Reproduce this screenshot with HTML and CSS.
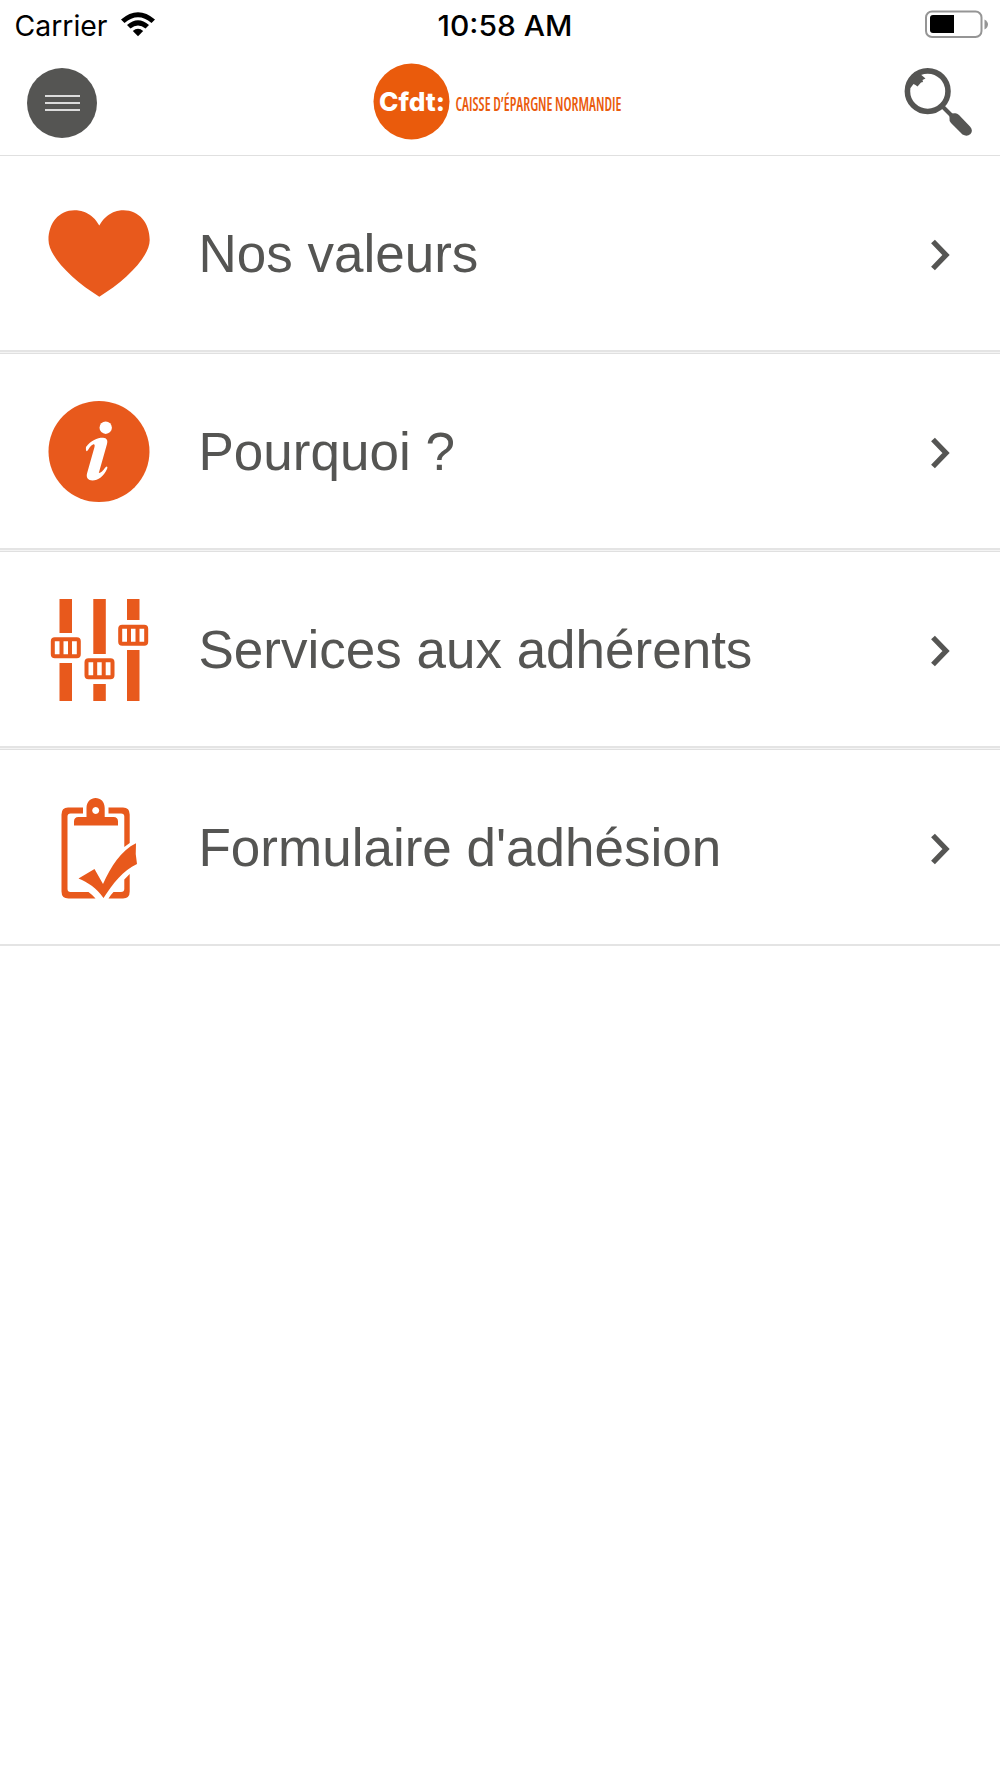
FILE: index.html
```html
<!DOCTYPE html>
<html lang="fr">
<head>
    <meta charset="UTF-8">
    <meta name="viewport" content="width=device-width, initial-scale=1.0">
    <title>CFDT Caisse d'Épargne Normandie</title>
    <link rel="stylesheet" href="styles.css">
</head>
<body>

    <div class="status">
        <svg class="carrier" viewBox="0 0 160 50">
            <text x="14.500" y="35.500" font-size="28" textLength="93" lengthAdjust="spacingAndGlyphs">Carrier</text>
            <path d="M121 19.500 Q138 4.800 155 19.500 L151.500 23 Q138 11.500 124.500 23 Z"/>
            <path d="M127 25 Q138 15.500 149 25 L145.500 28.500 Q138 22.500 130.500 28.500 Z"/>
            <path d="M132.800 31 Q138 26.500 143.200 31 L138 36.300 Z"/>
        </svg>
        <svg class="clock" viewBox="0 0 160 50">
            <text x="16.500" y="35.500" font-size="28" font-weight="500" textLength="135" lengthAdjust="spacingAndGlyphs">10:58 AM</text>
        </svg>
        <svg class="battery" viewBox="0 0 80 50">
            <rect x="6" y="11.500" width="55.500" height="25.500" rx="6" fill="none" stroke="#959595" stroke-width="2"/>
            <path d="M13 15 H34 V33 H13 Q10 33 10 30 V18 Q10 15 13 15 Z"/>
            <path d="M64.500 19.500 Q68 21.500 68 24.300 Q68 27.500 64.500 29.500 Z" fill="#959595"/>
        </svg>
    </div>

    <header class="header">
        <button class="menu" aria-label="Menu">
            <span></span>
            <span></span>
            <span></span>
        </button>
        <svg class="logo" viewBox="0 0 280 80">
            <circle cx="41.500" cy="39.500" r="38" fill="#ea5b0c"/>
            <text class="brand" x="9" y="48.500" font-size="26" textLength="66" lengthAdjust="spacingAndGlyphs">Cfdt:</text>
            <text class="section" x="85.500" y="48.500" font-size="19" textLength="166" lengthAdjust="spacingAndGlyphs">CAISSE D’ÉPARGNE NORMANDIE</text>
        </svg>
        <svg class="search" viewBox="0 0 70 70">
            <circle cx="24.700" cy="24.200" r="20.300" fill="none" stroke="#555553" stroke-width="5.600"/>
            <path d="M6 18 L16 6 L22.500 11.500 L19.500 13 L20 15 L18 15.500 L14.500 19.500 L12.500 18 L10.500 17 L7.500 21 Z" fill="#555553"/>
            <path d="M38 38 L50 50" stroke="#555553" stroke-width="4"/>
            <path d="M46.500 51 Q45.500 46 52 46.200 Q54 46 56 48 L67 59.500 Q70.500 63.500 67.500 67 Q64 70 59.500 67.500 L48 56 Q46 54 46.500 51 Z" fill="#555553"/>
        </svg>
    </header>

    <main class="list">
        <a class="item">
            <svg class="icon" viewBox="0 0 110 110">
                <path d="M54.300 26.600 C47 13 35 11.300 29.500 11.300 C14 11.300 3.500 24 3.500 41 C3.500 58 29 82 54.300 97.700 C80 82 104.700 58 104.700 41 C104.700 24 94 11.300 78.500 11.300 C73 11.300 62 13 54.300 26.600 Z"/>
            </svg>
            <span class="label">Nos valeurs</span>
            <svg class="arrow" viewBox="0 0 24 36"><path d="M3 4.500 L16 18 L3 31.500"/></svg>
        </a>
        <a class="item">
            <svg class="icon" viewBox="0 0 110 110">
                <circle cx="54" cy="54.500" r="50.500"/>
                <g fill="#fff">
                    <circle cx="60.700" cy="30.700" r="6.200"/>
                    <path d="M41 50 C46 43 53 40.500 58 40.700 C62 41 63 43.500 62 47 L53.800 76 C57 76 59 71.500 61.500 69.500 Q63 69.500 62 72 C59 79 53 83.500 47.500 83.500 C43 83.500 41 80.500 42 76.500 L49.500 50 C50 48 49.500 47 48 47.500 C45 49 44 52 42 54.300 Q40.500 54 41 50 Z"/>
                </g>
            </svg>
            <span class="label">Pourquoi ?</span>
            <svg class="arrow" viewBox="0 0 24 36"><path d="M3 4.500 L16 18 L3 31.500"/></svg>
        </a>
        <a class="item">
            <svg class="icon" viewBox="0 0 110 110">
                <path d="M14.500 4 h12.500 v34 h-12.500 Z M14.500 68 h12.500 v38 h-12.500 Z M48.300 4 h12.500 v55 h-12.500 Z M48.300 89 h12.500 v17 h-12.500 Z M82 4 h12.500 v21 h-12.500 Z M82 55 h12.500 v51 h-12.500 Z"/>
                <g class="knob">
                    <rect x="7.800" y="44.200" width="26" height="17" rx="2"/>
                    <path d="M16.500 44 v17 M25 44 v17"/>
                    <rect x="41.500" y="65.300" width="26" height="17" rx="2"/>
                    <path d="M50.200 65 v17 M58.700 65 v17"/>
                    <rect x="75.200" y="31.700" width="26" height="17" rx="2"/>
                    <path d="M84 32 v17 M92.500 32 v17"/>
                </g>
            </svg>
            <span class="label">Services aux adhérents</span>
            <svg class="arrow" viewBox="0 0 24 36"><path d="M3 4.500 L16 18 L3 31.500"/></svg>
        </a>
        <a class="item">
            <svg class="icon" viewBox="0 0 110 110">
                <path fill-rule="evenodd" d="M29 32.500 V28.500 Q29 24 33.500 24 H41.500 V15 C41.500 8.500 46 5 50.500 5 C55.500 5 59.700 8.500 59.700 15 V24 H68.500 Q73 24 73 28.500 V32.500 Z M50.700 14 a3.500 3.500 0 1 0 0.010 0 Z"/>
                <path d="M38 14.500 H23 Q16.500 14.500 16.500 21.500 V98.500 Q16.500 105.500 23.500 105.500 H50.500 Q47 101.500 43.500 99 H25.500 Q22.500 99 22.500 96 V23.500 Q22.500 20.500 25.500 20.500 H38 Z"/>
                <path d="M63.500 14.500 H78 Q84.700 14.500 84.700 21.500 V50 L79.300 54 V23.500 Q79.300 20.500 76 20.500 H63.500 Z"/>
                <path d="M84.700 81 V98.500 Q84.700 105.500 78 105.500 H63.500 Q66 101.500 68.500 99 H76 Q79.300 99 79.300 96 V86.500 Z"/>
                <path d="M33.500 85.500 L49.500 76 L58 91 C66 73.500 76 57.500 91 50.300 Q90 60.500 92 71 C78 77.500 68 90.500 58.500 105 C51 94.500 43 89.500 33.500 85.500 Z"/>
            </svg>
            <span class="label">Formulaire d'adhésion</span>
            <svg class="arrow" viewBox="0 0 24 36"><path d="M3 4.500 L16 18 L3 31.500"/></svg>
        </a>
    </main>

</body>
</html>
```
FILE: styles.css
```css
* {
    margin: 0;
    padding: 0;
    box-sizing: border-box;
}

body {
    background-color: #fff;
    color: #555553;
    font-family: "Liberation Sans", Arial, sans-serif;
}

svg {
    display: block;
    flex-shrink: 0;
    overflow: visible;
}

.status {
    display: flex;
    height: 50px;
    font-family: Inter, sans-serif;
}

.status svg {
    height: 50px;
}

.carrier {
    width: 160px;
}

.clock {
    width: 160px;
    margin-left: 261px;
}

.battery {
    width: 80px;
    margin-left: auto;
}

/* header */
.header {
    display: flex;
    align-items: center;
    height: 105px;
    padding: 0 27px 2px;
}

.menu {
    display: flex;
    flex-direction: column;
    align-items: center;
    justify-content: center;
    gap: 5px;
    width: 70px;
    height: 70px;
    margin-top: 2px;
    border: none;
    border-radius: 50%;
    background-color: #555553;
    cursor: pointer;
}

.menu span {
    width: 35px;
    height: 2px;
    background-color: #dcdcdc;
}

.logo {
    width: 280px;
    height: 80px;
    margin-left: 273px;
}

.brand {
    fill: #fff;
    font-family: Inter, sans-serif;
    font-weight: 800;
}

.section {
    fill: #ea5b0c;
    font-family: "Open Sans", sans-serif;
    font-weight: 600;
    font-stretch: 75%;
}

.search {
    width: 70px;
    height: 70px;
    margin-top: 1px;
    margin-left: auto;
}

/* list */
.list {
    background-color: #f4f4f4;
}

.item {
    display: flex;
    align-items: center;
    height: 197px;
    margin-bottom: 1px;
    padding: 2px 46px 0 45px;
    border-top: 1px solid #e0e0e0;
    border-bottom: 2px solid #e4e4e4;
    background-color: #fff;
}

.item:last-child {
    margin-bottom: 0;
}

.icon {
    width: 110px;
    height: 110px;
    fill: #e8591c;
}

.knob {
    fill: none;
    stroke: #e8591c;
    stroke-width: 4;
}

.label {
    margin-left: 43.5px;
    font-size: 53px;
    line-height: 60px;
}

.arrow {
    width: 24px;
    height: 36px;
    margin-top: 2px;
    margin-left: auto;
    fill: none;
    stroke: #555553;
    stroke-width: 5.3;
}
```
